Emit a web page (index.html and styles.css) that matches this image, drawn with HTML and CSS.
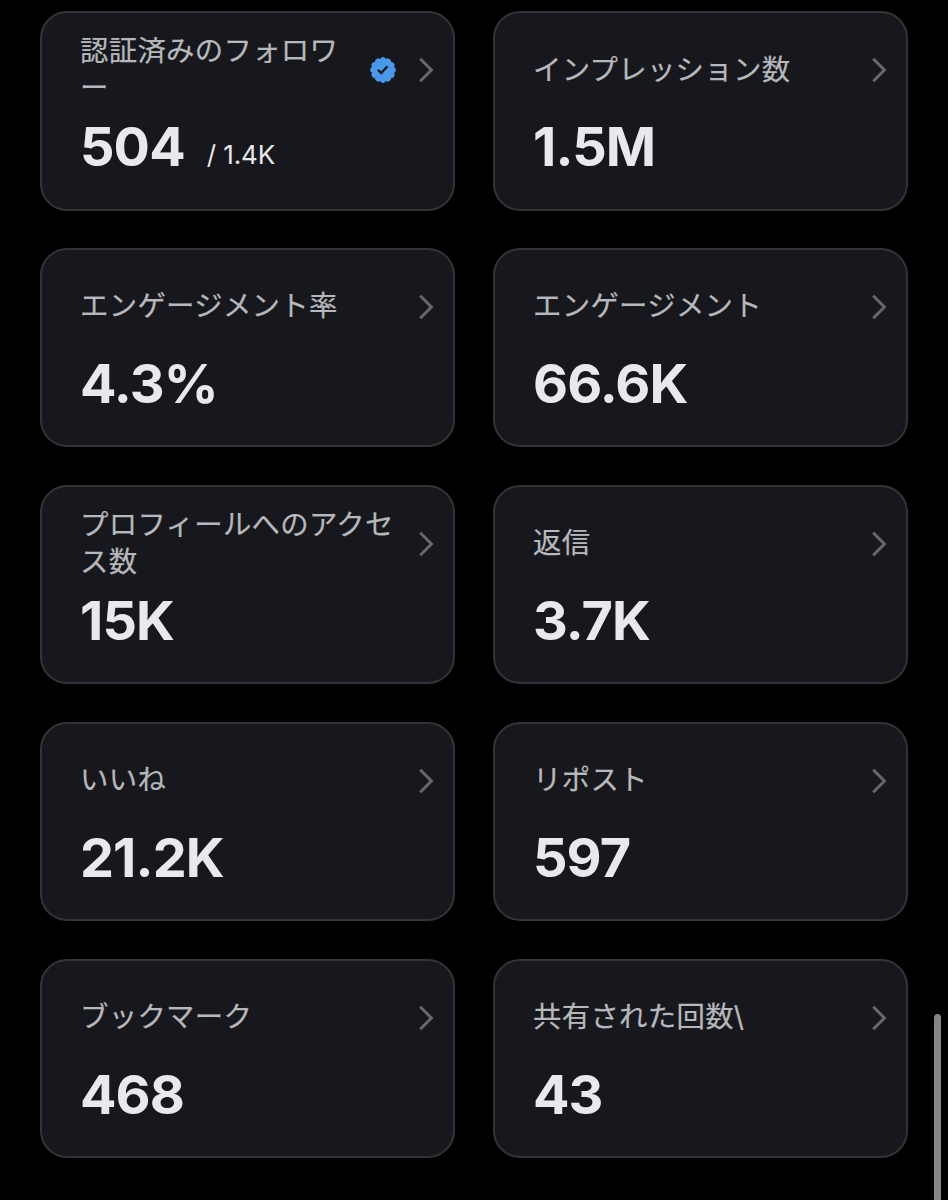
FILE: index.html
```html
<!DOCTYPE html>
<html lang="ja">
<head>
    <meta charset="UTF-8">
    <meta name="viewport" content="width=device-width, initial-scale=1.0">
    <title>アナリティクス</title>
    <link rel="stylesheet" href="styles.css">
</head>
<body>
    <svg class="symbols">
        <symbol id="chevron" viewBox="0 0 16 26">
            <path d="M2.2 1.7 13.4 13 2.2 24.3" fill="none" stroke="currentColor" stroke-width="3"/>
        </symbol>
    </svg>

    <div class="stats">
        <div class="card">
            <div class="card-header">
                <span class="label">認証済みのフォロワー</span>
                <svg class="badge" viewBox="0 0 26 26">
                    <circle cx="13" cy="13" r="10.8" fill="#4a99e9"/>
                    <!-- round dots make the scalloped edge -->
                    <circle cx="13" cy="13" r="9.8" fill="none" stroke="#4a99e9" stroke-width="6" stroke-linecap="round" pathLength="12" stroke-dasharray="0.001 0.999"/>
                    <path d="M8 12.8 11.3 16.1 17.4 9.3" fill="none" stroke="#17181d" stroke-width="2.4"/>
                </svg>
                <svg class="chevron"><use href="#chevron"/></svg>
            </div>
            <div class="value">504<span class="total">/ 1.4K</span></div>
        </div>
        <div class="card">
            <div class="card-header">
                <span class="label">インプレッション数</span>
                <svg class="chevron"><use href="#chevron"/></svg>
            </div>
            <div class="value">1.5M</div>
        </div>
        <div class="card">
            <div class="card-header">
                <span class="label">エンゲージメント率</span>
                <svg class="chevron"><use href="#chevron"/></svg>
            </div>
            <div class="value">4.3%</div>
        </div>
        <div class="card">
            <div class="card-header">
                <span class="label">エンゲージメント</span>
                <svg class="chevron"><use href="#chevron"/></svg>
            </div>
            <div class="value">66.6K</div>
        </div>
        <div class="card">
            <div class="card-header">
                <span class="label">プロフィールへのアクセス数</span>
                <svg class="chevron"><use href="#chevron"/></svg>
            </div>
            <div class="value">15K</div>
        </div>
        <div class="card">
            <div class="card-header">
                <span class="label">返信</span>
                <svg class="chevron"><use href="#chevron"/></svg>
            </div>
            <div class="value">3.7K</div>
        </div>
        <div class="card">
            <div class="card-header">
                <span class="label">いいね</span>
                <svg class="chevron"><use href="#chevron"/></svg>
            </div>
            <div class="value">21.2K</div>
        </div>
        <div class="card">
            <div class="card-header">
                <span class="label">リポスト</span>
                <svg class="chevron"><use href="#chevron"/></svg>
            </div>
            <div class="value">597</div>
        </div>
        <div class="card">
            <div class="card-header">
                <span class="label">ブックマーク</span>
                <svg class="chevron"><use href="#chevron"/></svg>
            </div>
            <div class="value">468</div>
        </div>
        <div class="card">
            <div class="card-header">
                <span class="label">共有された回数\</span>
                <svg class="chevron"><use href="#chevron"/></svg>
            </div>
            <div class="value">43</div>
        </div>
    </div>
    <div class="scroll-thumb"></div>
</body>
</html>
```
FILE: styles.css
```css
* {
    box-sizing: border-box;
}
body {
    margin: 0;
    height: 1200px;
    overflow: hidden;
    background-color: #000;
    color: #e7e9ea;
    font-family: Inter, "Noto Sans CJK JP", sans-serif;
}
.symbols {
    display: none;
}
.stats {
    display: grid;
    grid-template-columns: 1fr 1fr;
    grid-auto-rows: 199.5px;
    column-gap: 38px;
    row-gap: 37.4px;
    padding: 11px 40px 0;
}
.card {
    padding: 18px 19px 0 38px;
    border: 2px solid #333437;
    border-radius: 27px;
    background-color: #17181d;
}
.card-header {
    display: flex;
    align-items: center;
    height: 76px;
}
.label {
    flex: 1;
    color: #b7b8bc;
    font-size: 28.4px;
    letter-spacing: 0.3px;
    line-height: 37px;
    word-break: break-all;
    -webkit-text-stroke: 0.2px #b7b8bc;
}
.badge {
    width: 26px;
    height: 26px;
    margin: 2px 22px 0 10px;
}
.chevron {
    width: 16px;
    height: 26px;
    margin-top: 2px;
    color: #67686c;
}
.value {
    margin-top: 8px;
    font-size: 54px;
    font-weight: 700;
    letter-spacing: -0.9px;
    line-height: 64px;
}
.total {
    margin-left: 22px;
    font-size: 26px;
    font-weight: 400;
    letter-spacing: -0.1px;
    line-height: 1;
    vertical-align: 2px;
}
/* scroll indicator, runs off the bottom of the screen */
.scroll-thumb {
    position: fixed;
    top: 1014px;
    right: 7px;
    bottom: -10px;
    width: 7px;
    border-radius: 4px;
    background-color: #868686;
}
```
